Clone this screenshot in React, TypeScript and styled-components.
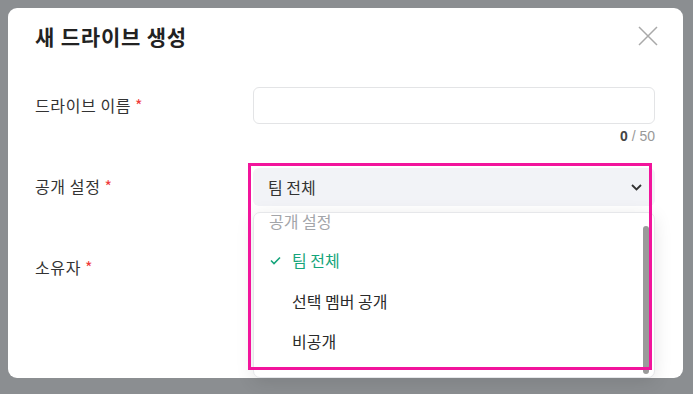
import styled, { createGlobalStyle } from "styled-components";

const GlobalStyle = createGlobalStyle`
  html, body {
    margin: 0;
    padding: 0;
    background: #8b8e91;
    font-family: "Noto Sans CJK KR", "Noto Sans", sans-serif;
  }
`;

const Overlay = styled.div`
  width: 693px;
  height: 394px;
  padding: 8px 10px 16px 8px;
  box-sizing: border-box;
  background: #8b8e91;
  position: relative;
  overflow: hidden;
`;

const Modal = styled.div`
  width: 675px;
  height: 370px;
  background: #fff;
  border-radius: 9px;
  box-sizing: border-box;
  padding: 13px 28px 0 27px;
  display: flex;
  flex-direction: column;
`;

const Header = styled.div`
  display: flex;
  align-items: center;
  justify-content: space-between;
  height: 30px;
`;

const Title = styled.h2`
  margin: 0;
  font-size: 21px;
  font-weight: 700;
  color: #222;
  letter-spacing: 0.8px;
`;

const CloseButton = styled.button`
  border: none;
  background: none;
  padding: 0;
  margin-right: -4px;
  width: 22px;
  height: 22px;
  display: flex;
  align-items: center;
  justify-content: center;
`;

const Form = styled.div`
  margin-top: 36px;
  display: flex;
  flex-direction: column;
`;

const Row = styled.div<{ $gap: number }>`
  display: grid;
  grid-template-columns: 218px 1fr;
  align-items: start;
  margin-bottom: ${(p) => p.$gap}px;
`;

const Label = styled.label`
  font-size: 16px;
  color: #333;
  line-height: 36px;
  letter-spacing: 0.6px;
`;

const Required = styled.span`
  color: #ef3b3b;
  margin-left: 4px;
`;

const Field = styled.div`
  display: flex;
  flex-direction: column;
  position: relative;
`;

const TextInput = styled.input`
  height: 37px;
  box-sizing: border-box;
  border: 1px solid #e3e4e6;
  border-radius: 6px;
  padding: 0 14px;
  font-size: 16px;
  outline: none;
`;

const Counter = styled.div`
  align-self: flex-end;
  font-family: "Liberation Sans", Arial, sans-serif;
  font-size: 14px;
  color: #999;
  margin-top: 4px;
  b {
    color: #444;
  }
`;

const SelectBox = styled.div`
  height: 38px;
  background: #f2f3f7;
  border-radius: 6px;
  display: flex;
  align-items: center;
  justify-content: space-between;
  padding: 0 13px 0 15px;
  font-size: 16px;
  color: #333;
`;

const Menu = styled.div`
  position: absolute;
  top: 44px;
  left: 0;
  right: 0;
  height: 164px;
  background: #fff;
  border: 1px solid #e6e7ea;
  border-radius: 7px;
  box-shadow: 0 4px 18px rgba(0, 0, 0, 0.1);
  overflow: hidden;
  z-index: 2;
`;

const MenuList = styled.div`
  margin-top: -11px;
`;

const GroupLabel = styled.div`
  height: 38px;
  display: flex;
  align-items: center;
  padding-left: 15px;
  font-size: 16px;
  color: #a3a5a9;
`;

const Option = styled.div<{ $selected?: boolean }>`
  height: 40.5px;
  display: flex;
  align-items: center;
  padding-left: 16px;
  font-size: 16px;
  color: ${(p) => (p.$selected ? "#15a57b" : "#2a2a2a")};
`;

const CheckSlot = styled.span`
  width: 22px;
  display: inline-flex;
  align-items: center;
`;

const ScrollThumb = styled.div`
  position: absolute;
  right: 5px;
  top: 13px;
  bottom: 3px;
  width: 6px;
  border-radius: 3px;
  background: #9a9a9a;
`;

const Highlight = styled.div`
  position: absolute;
  left: 248px;
  top: 163px;
  width: 404px;
  height: 207px;
  box-sizing: border-box;
  border: 3px solid #f2149c;
  pointer-events: none;
  z-index: 5;
`;

const Check = () => (
  <svg width="11" height="9" viewBox="0 0 11 9" fill="none">
    <path d="M1 4.5 L4 7.5 L10 1.5" stroke="#15a57b" strokeWidth="1.6" />
  </svg>
);

const Chevron = () => (
  <svg width="11" height="7" viewBox="0 0 11 7" fill="none">
    <path d="M1 1 L5.5 5.5 L10 1" stroke="#333" strokeWidth="1.8" />
  </svg>
);

const CloseIcon = () => (
  <svg width="20" height="20" viewBox="0 0 20 20" fill="none">
    <path d="M1 1 L19 19 M19 1 L1 19" stroke="#a9a9a9" strokeWidth="1.5" />
  </svg>
);

const options = ["팀 전체", "선택 멤버 공개", "비공개"];

export default function App() {
  return (
    <Overlay>
      <GlobalStyle />
      <Modal>
        <Header>
          <Title>새 드라이브 생성</Title>
          <CloseButton aria-label="닫기">
            <CloseIcon />
          </CloseButton>
        </Header>
        <Form>
          <Row $gap={24}>
            <Label>
              드라이브 이름<Required>*</Required>
            </Label>
            <Field>
              <TextInput />
              <Counter>
                <b>0</b> / 50
              </Counter>
            </Field>
          </Row>
          <Row $gap={43}>
            <Label>
              공개 설정<Required>*</Required>
            </Label>
            <Field>
              <SelectBox>
                팀 전체
                <Chevron />
              </SelectBox>
              <Menu>
                <MenuList>
                  <GroupLabel>공개 설정</GroupLabel>
                  {options.map((o, i) => (
                    <Option key={o} $selected={i === 0}>
                      <CheckSlot>{i === 0 && <Check />}</CheckSlot>
                      {o}
                    </Option>
                  ))}
                </MenuList>
                <ScrollThumb />
              </Menu>
            </Field>
          </Row>
          <Row $gap={0}>
            <Label>
              소유자<Required>*</Required>
            </Label>
            <Field />
          </Row>
        </Form>
      </Modal>
      <Highlight />
    </Overlay>
  );
}
